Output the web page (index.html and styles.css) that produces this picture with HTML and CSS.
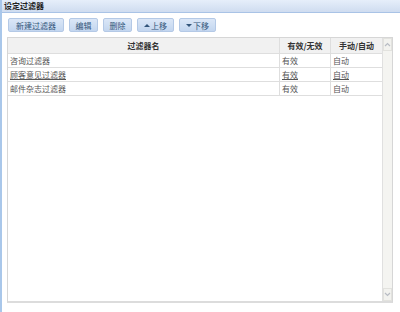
FILE: index.html
```html
<!DOCTYPE html>
<html lang="zh">
<head>
  <meta charset="UTF-8" />
  <title>设定过滤器</title>
  <link rel="stylesheet" href="styles.css">
</head>
<body>
  <div class="panel">
    <div class="title">设定过滤器</div>
    <div class="toolbar">
      <button class="btn wide">新建过滤器</button>
      <button class="btn">编辑</button>
      <button class="btn">删除</button>
      <button class="btn move"><span class="arrow up"></span>上移</button>
      <button class="btn move"><span class="arrow down"></span>下移</button>
    </div>
    <div class="grid">
      <div class="list">
        <table>
          <thead>
            <tr><th class="c-name">过滤器名</th><th class="c-valid">有效/无效</th><th class="c-mode">手动/自动</th></tr>
          </thead>
          <tbody>
            <tr><td>咨询过滤器</td><td>有效</td><td>自动</td></tr>
            <tr><td><u>顾客意见过滤器</u></td><td><u>有效</u></td><td><u>自动</u></td></tr>
            <tr><td>邮件杂志过滤器</td><td>有效</td><td>自动</td></tr>
          </tbody>
        </table>
      </div>
      <div class="scrollbar">
        <div class="sb-btn">
          <svg width="7" height="5" viewBox="0 0 7 5"><path d="M1 4 L3.5 1.5 L6 4" fill="none" stroke="#b8bcc4" stroke-width="1.2"/></svg>
        </div>
        <div class="sb-track"></div>
        <div class="sb-btn">
          <svg width="7" height="5" viewBox="0 0 7 5"><path d="M1 1 L3.5 3.5 L6 1" fill="none" stroke="#b8bcc4" stroke-width="1.2"/></svg>
        </div>
      </div>
    </div>
  </div>
</body>
</html>
```

FILE: styles.css
```css
body {
  margin: 0;
  background: #fff;
  font-family: "Noto Sans CJK SC", "DejaVu Sans", sans-serif;
  font-size: 8px;
  color: #333;
}
.panel {
  width: 400px;
  height: 312px;
  border-left: 2px solid #a9c7ea;
  box-sizing: border-box;
  display: flex;
  flex-direction: column;
}
.title {
  height: 12px;
  line-height: 12px;
  padding-left: 2px;
  font-weight: bold;
  color: #222;
  background: linear-gradient(#e6eefa, #cfdcf0);
  border-bottom: 1px solid #a9c3e6;
}
.toolbar {
  display: flex;
  gap: 5px;
  padding: 5px 0 0 6px;
  height: 19px;
  box-sizing: content-box;
}
.btn {
  width: 29px;
  height: 14px;
  padding: 0;
  font: inherit;
  color: #33557a;
  background: linear-gradient(#dbe7f7, #c3d6ef);
  border: 1px solid #b4c9e6;
  border-radius: 2px;
  display: flex;
  align-items: center;
  justify-content: center;
  gap: 1px;
}
.btn.wide { width: 56px; }
.btn.move { width: 37px; }
.arrow {
  width: 0;
  height: 0;
  border-left: 3px solid transparent;
  border-right: 3px solid transparent;
}
.arrow.up { border-bottom: 3px solid #33557a; }
.arrow.down { border-top: 3px solid #33557a; }
.grid {
  margin: 0 7px 9px 5px;
  flex: 1;
  display: flex;
  border: 1px solid #d6d6d6;
  border-bottom: 2px solid #dcdcdc;
}
.list {
  flex: 1;
}
table {
  width: 100%;
  border-collapse: collapse;
}
th {
  height: 15px;
  padding: 0;
  background: #f1f1f1;
  font-weight: bold;
  color: #333;
  border-bottom: 1px solid #dedede;
  border-left: 1px solid #dedede;
}
th:first-child, td:first-child { border-left: none; }
td {
  height: 13px;
  padding: 0 2px;
  border-bottom: 1px solid #dedede;
  border-left: 1px solid #dedede;
  color: #555;
}
.c-valid { width: 50px; }
.c-mode { width: 51px; }
.scrollbar {
  width: 9px;
  display: flex;
  flex-direction: column;
  background: #f4f4f1;
  border-left: 1px solid #e0e0e0;
}
.sb-btn {
  height: 11px;
  display: flex;
  align-items: center;
  justify-content: center;
  background: #f2f2ef;
  border: 1px solid #e2e2de;
}
.sb-track { flex: 1; }
```
